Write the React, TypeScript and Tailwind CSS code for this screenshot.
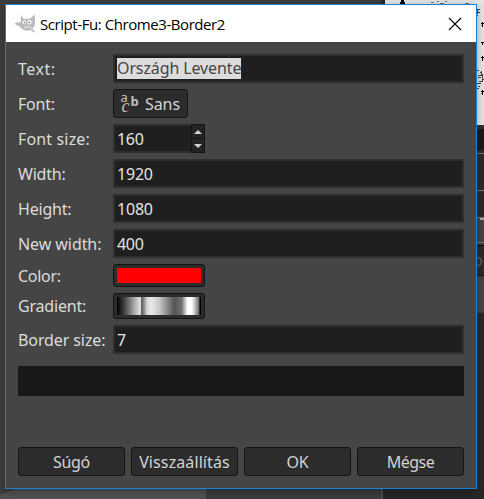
import type { ReactNode } from "react";

const entry =
  "h-[29px] w-full border-2 border-[#2f2f2f] bg-[#1f1f1f] flex items-center pl-[2px] text-[#e4e4e4] whitespace-nowrap";
const button =
  "border border-[#141414] rounded-[3px] bg-[#2c2c2c] text-[#d3d3d3] flex items-center justify-center whitespace-nowrap";

function Row({ label, tracking, children }: { label: string; tracking: string; children: ReactNode }) {
  return (
    <div className="flex items-center">
      <label className={`w-[95px] shrink-0 whitespace-nowrap leading-[22px] text-[#dcdcdc] ${tracking}`}>{label}</label>
      <div className="min-w-0 flex-1">{children}</div>
    </div>
  );
}

function Wilber() {
  return (
    <svg width="21" height="20" viewBox="0 0 21 20" className="shrink-0">
      <path
        d="M5.6 1 9 5.2Q12.5 4.2 15 4.6L19.8.5 20 9Q20 13 17 14.8L20 17.6 18.8 18.6 15.5 16Q9.5 18 5.8 14L3.5 11.6Q.3 11.8 0 9.2L1.4 8.3Q3.9 8.8 6 7.4Z"
        fill="#bcbcbc"
      />
      <ellipse cx="9.3" cy="8.4" rx="1.7" ry="1.8" fill="#fff" />
      <ellipse cx="14.4" cy="8.2" rx="2.1" ry="2.2" fill="#fff" />
      <circle cx="9.6" cy="8.6" r="0.9" fill="#999" />
      <circle cx="14.2" cy="8.4" r="1" fill="#999" />
      <path d="M9 13Q12 14.2 14.6 12.2L17 15" fill="none" stroke="#f2f2f2" strokeWidth="0.8" />
    </svg>
  );
}

function Backdrop() {
  return (
    <svg className="absolute inset-0" width="484" height="499" shapeRendering="crispEdges">
      <rect width="484" height="499" fill="#3d3d3d" />
      <rect x="381" width="4" height="5" fill="#292929" />
      <rect x="385" width="99" height="125" fill="#e5e5e5" />
      <path d="M401 0h3v2h1v2h-5V2h1z" fill="#000" />
      <g fill="none">
        <path d="M431 2.5h3m3-1h2m1 2h4m1-2h2m18 2h4" stroke="#777" />
        <path
          d="M477 9.5h3m-2 3h2m-3 3h1m-.5-6v4M477 70.5h2m1 2h2m-4 3h3m.5-5v5m-4 2h3m1 2h2m-5 2h3m.5-8v8m-5 2h4m-3 3h2m-3 2h2"
          stroke="#444"
        />
        <path d="M481 23.5h3m-1.5-2v5M481 42.5h3m-1.5-1v3M481 57.5h3m-1.5-2v5M481 91.5h3m-1.5-2v5" stroke="#000" />
        <path d="M481 25.5h1m-1 68h1" stroke="#d66" />
      </g>
      <rect x="477" y="125" width="7" height="4" fill="#303030" />
      <rect x="477" y="129" width="7" height="21" fill="#1b1b1b" />
      <rect x="477" y="150" width="7" height="67" fill="#2b2b2b" />
      <rect x="477" y="219" width="7" height="23" fill="#444" />
      <path d="M477 153.5h7m-7 37h7m-7 27h7m-7 25h7" stroke="#777" />
      <rect x="480" y="218" width="4" height="2" fill="#aaa" />
      <rect x="470" y="245.5" width="20" height="30" fill="#2b2b2b" stroke="#141414" />
      <rect x="477" y="278" width="7" height="34" fill="#464646" />
      <rect x="477" y="313" width="7" height="186" fill="#292929" />
      <path d="M0 499V495L16 489H206V499Z" fill="#505050" />
      <rect x="206" y="489" width="175" height="10" fill="#3b3b3b" />
      <rect x="381" y="489" width="2" height="10" fill="#4b4b4b" />
      <rect x="383" y="489" width="101" height="10" fill="#272727" />
      <text x="473" y="266" fontFamily="Noto Sans, sans-serif" fontSize="16" fill="#5d5d5d">on</text>
    </svg>
  );
}

export default function App() {
  return (
    <div className="relative h-[499px] w-[484px] overflow-hidden pl-[5px] pt-[4px] text-[16px] font-['Noto_Sans',sans-serif]">
      <Backdrop />
      <main className="relative flex h-[485px] w-[472px] flex-col border border-[#1883d7] bg-[#454545] shadow-[0_2px_8px_rgba(0,0,0,0.3)]">
        <header className="flex h-[37px] shrink-0 items-center bg-white pl-[9px] pr-[14px]">
          <Wilber />
          <h1 className="ml-1 flex-1 whitespace-nowrap text-[15px] leading-[22px] tracking-[-0.43px] text-black font-['Open_Sans',sans-serif]">
            Script-Fu: Chrome3-Border2
          </h1>
          <svg width="14" height="14" viewBox="0 0 14 14">
            <path d="M1 1 13 13M13 1 1 13" stroke="#000" strokeWidth="1.1" />
          </svg>
        </header>

        <section className="mt-3 flex flex-col gap-[6px] px-3">
          <Row label="Text:" tracking="tracking-[0.5px]">
            <div className={entry}>
              <span className="h-[21px] w-[124px] bg-[#dcdcdc] leading-[21px] tracking-[-0.12px] text-[#454545]">Országh Levente</span>
            </div>
          </Row>
          <Row label="Font:" tracking="tracking-[-0.2px]">
            <button className={`${button} h-[29px] w-[75px]`}>
              <svg width="20" height="20" className="mr-1 overflow-visible" fill="#c0c0c0" fontFamily="Noto Sans, sans-serif">
                <text x="-0.5" y="8" fontSize="13">a</text>
                <text x="9.5" y="12" fontSize="13" fontWeight="700">b</text>
                <text x="0.5" y="18" fontSize="18" fontStyle="italic" fontFamily="Liberation Serif, serif">c</text>
              </svg>
              <span className="tracking-[-0.1px]">Sans</span>
            </button>
          </Row>
          <Row label="Font size:" tracking="tracking-[0.15px]">
            <div className="flex w-[92px]">
              <div className={`${entry} border-r-0 tracking-[-0.3px]`}>160</div>
              <div className="flex h-[29px] w-[14px] shrink-0 flex-col divide-y divide-[#141414] border border-[#141414] bg-[#242424]">
                <span className="flex flex-1 items-center justify-center">
                  <svg width="8" height="4"><path d="M0 4 4 0 8 4Z" fill="#d3d3d3" /></svg>
                </span>
                <span className="flex flex-1 items-center justify-center">
                  <svg width="8" height="4"><path d="M0 0H8L4 4Z" fill="#d3d3d3" /></svg>
                </span>
              </div>
            </div>
          </Row>
          <Row label="Width:" tracking="tracking-[-0.2px]">
            <div className={`${entry} tracking-[-0.2px]`}>1920</div>
          </Row>
          <Row label="Height:" tracking="tracking-[-0.2px]">
            <div className={`${entry} tracking-[-0.2px]`}>1080</div>
          </Row>
          <Row label="New width:" tracking="tracking-[-0.07px]">
            <div className={`${entry} tracking-[-0.3px]`}>400</div>
          </Row>
          <Row label="Color:" tracking="tracking-[-0.3px]">
            <button className={`${button} h-[23px] w-[92px]`}>
              <span className="h-[15px] w-[84px] bg-[#ff0000]" />
            </button>
          </Row>
          <Row label="Gradient:" tracking="tracking-[-0.2px]">
            <button className={`${button} h-[26px] w-[92px]`}>
              <span className="h-[18px] w-[84px] bg-[linear-gradient(90deg,#000_0%,#3c3c3c_8%,#d8d8d8_26%,#dcdcdc_28.5%,#606060_29%,#777_31%,#d8d8d8_36%,#e8e8e8_41%,#c5c5c5_51%,#555_68%,#707070_77%,#fff_84%,#fff_89%,#777_97%,#000_99%)]" />
            </button>
          </Row>
          <Row label="Border size:" tracking="tracking-[-0.1px]">
            <div className={entry}>7</div>
          </Row>
        </section>

        <div className="mx-3 mt-3 h-[30px] shrink-0 bg-[#191919]" />
        <footer className="mx-3 mt-[51px] grid grid-cols-4 gap-[6px]">
          <button className={`${button} h-[29px] tracking-[-0.3px]`}>Súgó</button>
          <button className={`${button} h-[29px] tracking-[0.1px]`}>Visszaállítás</button>
          <button className={`${button} h-[29px] tracking-[-0.2px]`}>OK</button>
          <button className={`${button} h-[29px] tracking-[-0.5px]`}>Mégse</button>
        </footer>
      </main>
    </div>
  );
}
